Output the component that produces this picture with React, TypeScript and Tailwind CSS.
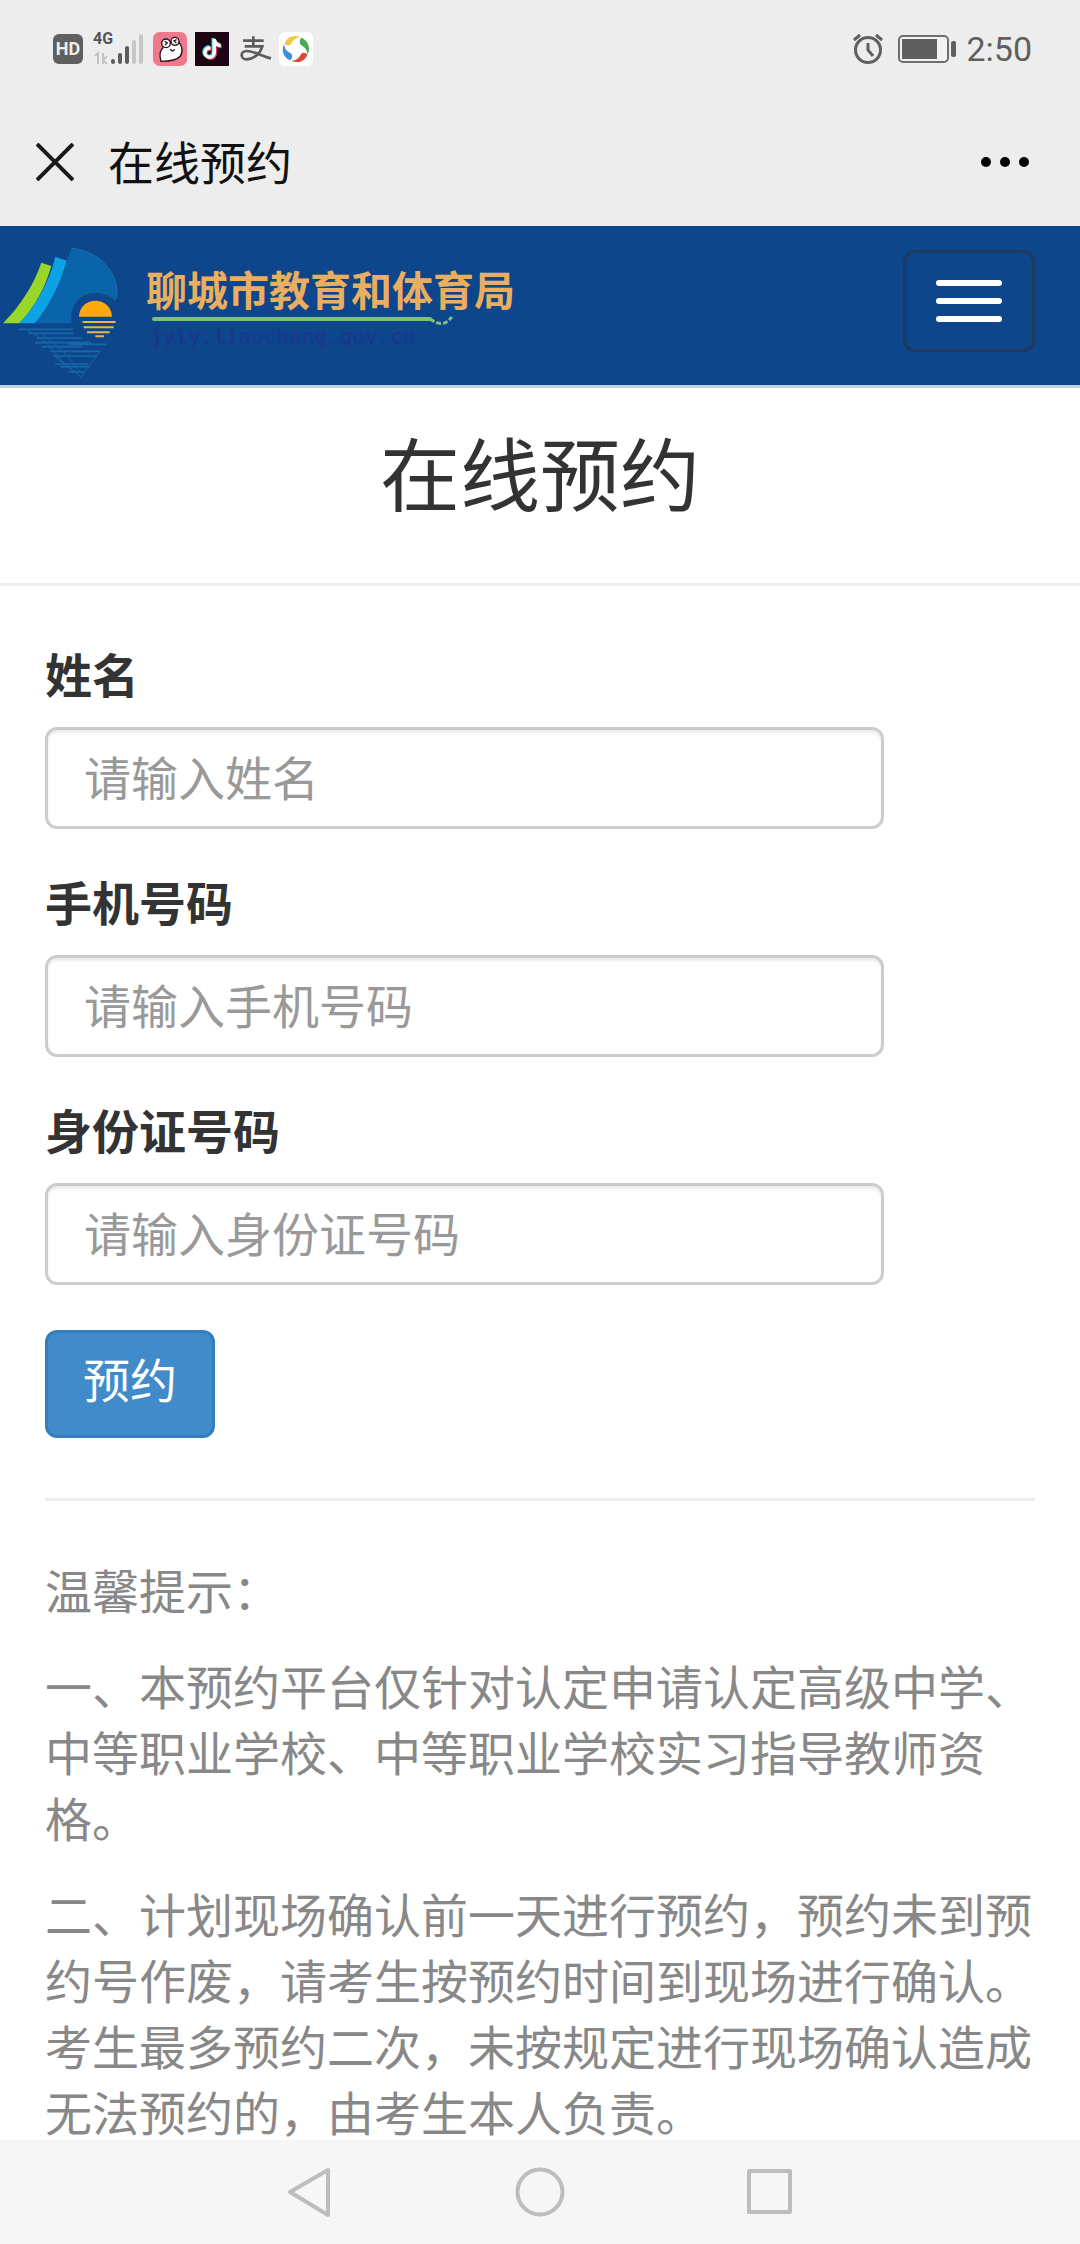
import type { ReactNode } from "react";
import { FaTiktok } from "react-icons/fa";

const FIELDS = [
  { id: "name", label: "姓名", placeholder: "请输入姓名", type: "text" },
  { id: "phone", label: "手机号码", placeholder: "请输入手机号码", type: "tel" },
  { id: "idcard", label: "身份证号码", placeholder: "请输入身份证号码", type: "text" },
];

const TIPS = [
  "温馨提示：",
  "一、本预约平台仅针对认定申请认定高级中学、中等职业学校、中等职业学校实习指导教师资格。",
  "二、计划现场确认前一天进行预约，预约未到预约号作废，请考生按预约时间到现场进行确认。考生最多预约二次，未按规定进行现场确认造成无法预约的，由考生本人负责。",
];

function Signal() {
  return (
    <div className="relative ml-[10px] h-9 w-[52px]">
      <span className="absolute left-0 top-0 font-[Roboto] text-base font-bold leading-4 text-[#555]">
        4G
      </span>
      <svg viewBox="0 0 52 36" className="h-full w-full" aria-hidden="true">
        <g fill="none" stroke="#c4c4c4" strokeWidth="2">
          <path d="M2 25l3-3v11M10 22v11M14 25l-4 4 4 4" />
        </g>
        <rect x="18" y="28" width="4" height="5" rx="2" fill="#5c5c5c" />
        <rect x="25" y="22" width="4" height="11" rx="2" fill="#5c5c5c" />
        <rect x="32" y="15" width="4" height="18" rx="2" fill="#5c5c5c" />
        <rect x="39" y="9" width="4" height="24" rx="2" fill="#c6c6c6" />
        <rect x="46" y="3" width="4" height="30" rx="2" fill="#c6c6c6" />
      </svg>
    </div>
  );
}

function FrogApp() {
  return (
    <svg viewBox="0 0 102 102" className="ml-2 size-[34px]" aria-hidden="true">
      <rect width="102" height="102" rx="20" fill="#f0788c" />
      <path
        d="M30 47C18 58 20 74 24 88c22 0 47-2 58-16 10-14 4-34-6-43-8-6-16 1-20 4-9-9-26-4-26 14z"
        fill="#fff"
        stroke="#2b1015"
        strokeWidth="4"
      />
      <circle cx="39" cy="34" r="13" fill="#fff" stroke="#2b1015" strokeWidth="4" />
      <circle cx="66" cy="28" r="12" fill="#fff" stroke="#2b1015" strokeWidth="4" />
      <path
        d="M35 28l8 5-7 6M71 23l-8 4 7 6M52 51q5 11 13 1"
        fill="none"
        stroke="#2b1015"
        strokeWidth="4"
      />
    </svg>
  );
}

function TiktokApp() {
  return (
    <div className="relative ml-2 size-[34px] bg-[#1d0613]">
      <FaTiktok className="absolute left-[6px] top-[6px] size-5 text-[#3ad8d8]" />
      <FaTiktok className="absolute left-2 top-2 size-5 text-[#e0355f]" />
      <FaTiktok className="absolute left-[7px] top-[7px] size-5 text-white" />
    </div>
  );
}

function AlipayMark() {
  return (
    <svg viewBox="0 0 102 84" className="ml-[9px] h-7 w-[34px]" aria-hidden="true">
      <path
        d="M46 4v28M15 17h62M20 34h53C66 58 46 73 26 73 6 73 6 48 26 48c22 0 48 17 73 22"
        fill="none"
        stroke="#5c5c5c"
        strokeWidth="8"
      />
    </svg>
  );
}

function PinwheelApp() {
  return (
    <svg viewBox="0 0 102 102" className="ml-[7px] size-[34px]" aria-hidden="true">
      <rect width="102" height="102" rx="18" fill="#fff" />
      <path d="M17 37C22 14 44 6 65 16 49 17 43 24 37 35c-6 7-14 7-20 2z" fill="#f1c644" />
      <path d="M67 17c22 9 28 31 19 51-3-17-9-22-20-29-6-7-5-15 1-22z" fill="#45ab4d" />
      <path d="M85 69C77 88 56 96 37 86c16-1 23-8 28-18 6-8 15-7 20 1z" fill="#d84637" />
      <path d="M34 85C14 77 6 57 15 36c2 16 9 22 20 28 7 6 5 15-1 21z" fill="#3d8ddb" />
    </svg>
  );
}

function StatusBar() {
  return (
    <div className="flex h-[98px] items-center justify-between pl-[53px] pr-12">
      <div className="flex items-center">
        <span className="flex size-[30px] items-center justify-center rounded-md bg-[#5f5f5f] font-[Roboto] text-lg font-bold leading-none text-[#ededed]">
          HD
        </span>
        <Signal />
        <FrogApp />
        <TiktokApp />
        <AlipayMark />
        <PinwheelApp />
      </div>
      <div className="flex items-center">
        <svg
          viewBox="0 0 30 32"
          className="h-8 w-[30px]"
          fill="none"
          stroke="#5f5f5f"
          strokeWidth="3"
          aria-hidden="true"
        >
          <circle cx="15" cy="17" r="12.5" />
          <path d="M15 10v7l5 6M1 7l6-5M29 7l-6-5" />
        </svg>
        <svg viewBox="0 0 58 28" className="ml-[15px] h-7 w-[58px]" aria-hidden="true">
          <rect x="1" y="1" width="49" height="26" rx="4" fill="#f3f3f3" stroke="#6e6e6e" strokeWidth="2" />
          <rect x="4" y="4" width="35" height="20" fill="#5f5f5f" />
          <rect x="53" y="6" width="5" height="16" rx="2" fill="#5f5f5f" />
        </svg>
        <span className="ml-[10px] font-[Roboto] text-[34px] leading-10 text-[#5f5f5f]">2:50</span>
      </div>
    </div>
  );
}

function TitleBar() {
  return (
    <div className="flex h-32 items-center pl-9 pr-[51px]">
      <button type="button" aria-label="关闭" className="size-[38px]">
        <svg viewBox="0 0 38 38" stroke="#1a1a1a" strokeWidth="4">
          <path d="M1 1l36 36M37 1L1 37" />
        </svg>
      </button>
      <span className="ml-[34px] pb-1 text-[46px] leading-[60px] text-[#111]">在线预约</span>
      <button type="button" aria-label="更多" className="ml-auto flex gap-[9px]">
        <i className="size-[10px] rounded-full bg-black" />
        <i className="size-[10px] rounded-full bg-black" />
        <i className="size-[10px] rounded-full bg-black" />
      </button>
    </div>
  );
}

function BureauLogo() {
  return (
    <svg viewBox="0 18 360 477" className="h-[159px] w-[120px]" aria-hidden="true">
      <path d="M215 84c76 10 136 62 136 137 0 10-3 17-8 20-20-22-60-28-92-14-26 14-42 42-36 83H104c45-64 78-130 100-196z" fill="#0964a9" />
      <path d="M215 84c76 10 136 62 136 137 0 10-3 17-8 20" fill="none" stroke="#2a7fae" strokeWidth="2" />
      <path d="M166 110l34 12c-20 70-51 134-96 188H58c55-60 90-126 108-200z" fill="#0da2e3" />
      <path d="M124 128l30 10C136 204 104 260 58 310H9c55-56 92-116 115-182z" fill="#9ad52a" />
      <path d="M237 290c2-64 96-64 99 0z" fill="#fba90a" />
      <path d="M248 306h99M251 322h90M261 337h68M286 349h26" stroke="#e8b54e" strokeWidth="6" />
      <g fill="none" stroke="#1768aa" strokeWidth="5">
        <path d="M55 328h165M85 340h135M110 354h135M105 368h170M125 380h120M205 373h115M150 394h150M160 408h130M165 432h100M180 440h90M205 456h50" />
        <path d="M80 328l60 40 40 50 60 50M125 340l70 60 50 60M160 405l60 50M300 394l-60 80" strokeWidth="3" />
      </g>
    </svg>
  );
}

function SiteNav() {
  return (
    <nav className="flex items-start justify-between border-b-[3px] border-[#c3d0e2] bg-[#0d468a] pr-[45px]">
      <a href="#home" className="flex">
        <BureauLogo />
        <span className="flex flex-col pl-[26px] pt-[39px]">
          <span className="text-[41px] font-bold leading-[46px] text-[#e9ae60]">
            聊城市教育和体育局
          </span>
          <svg viewBox="0 0 320 14" className="h-[14px] w-80" fill="none" stroke="#7fbf7f" aria-hidden="true">
            <path d="M8 8H284" strokeWidth="4" strokeLinecap="round" />
            <path d="M284 8q12 8 18 2l4-4" strokeWidth="3" strokeDasharray="5 2" />
          </svg>
          <span className="pl-1 font-['DejaVu_Sans_Mono'] text-[21px] leading-6 text-[#1c3590]">
            jyly.liaocheng.gov.cn
          </span>
        </span>
      </a>
      <button
        type="button"
        aria-label="菜单"
        className="mt-6 flex flex-col gap-3 rounded-xl border-[3px] border-[#1f3a5c] px-[30px] py-[27px]"
      >
        <i className="h-[6px] w-[66px] rounded-full bg-white" />
        <i className="h-[6px] w-[66px] rounded-full bg-white" />
        <i className="h-[6px] w-[66px] rounded-full bg-white" />
      </button>
    </nav>
  );
}

function SystemKey({ label, children }: { label: string; children: ReactNode }) {
  return (
    <button type="button" aria-label={label} className="size-[52px]">
      <svg viewBox="0 0 52 52" fill="none" stroke="#bdbdbd" strokeWidth="4" strokeLinejoin="round">
        {children}
      </svg>
    </button>
  );
}

export default function App() {
  return (
    <div className="flex min-h-screen flex-col bg-white font-['Noto_Sans_CJK_SC',sans-serif]">
      <header className="bg-[#ededed]">
        <StatusBar />
        <TitleBar />
      </header>

      <SiteNav />
      <h1 className="border-b-[3px] border-[#eee] pb-[69px] pt-[38px] text-center text-[80px] leading-[88px] text-[#333]">
        在线预约
      </h1>

      <main className="-mb-1 flex-1 px-[45px] pt-[54px]">
        <form className="flex flex-col items-start" onSubmit={(e) => e.preventDefault()}>
          <div className="flex w-full flex-col gap-[39px]">
            {FIELDS.map((f) => (
              <div key={f.id} className="flex flex-col gap-[21px]">
                <label htmlFor={f.id} className="text-[47px] font-bold leading-[66px] text-[#333]">
                  {f.label}
                </label>
                <input
                  id={f.id}
                  type={f.type}
                  placeholder={f.placeholder}
                  className="h-[102px] w-[839px] max-w-full rounded-xl border-[3px] border-[#ccc] px-9 pb-[6px] text-[47px] text-[#555] shadow-[inset_0_3px_3px_rgba(0,0,0,0.075)] placeholder:text-[#999]"
                />
              </div>
            ))}
          </div>
          <button
            type="submit"
            className="mt-[45px] rounded-xl border-[3px] border-[#357ebd] bg-[#428bca] px-[35px] pb-6 pt-3 text-[47px] leading-[66px] text-white"
          >
            预约
          </button>
        </form>

        <hr className="mb-[55px] mt-[60px] border-t-[3px] border-[#eee]" />

        <div className="flex flex-col gap-[30px] text-[47px] leading-[66px] text-[#888]">
          {TIPS.map((tip) => (
            <p key={tip}>{tip}</p>
          ))}
        </div>
      </main>

      <footer className="flex h-[104px] items-center justify-center gap-[178px] bg-[#f6f6f6]">
        <SystemKey label="返回">
          <path d="M44 4v45L6 26z" />
        </SystemKey>
        <SystemKey label="主页">
          <circle cx="26" cy="26" r="22.5" />
        </SystemKey>
        <SystemKey label="最近任务">
          <rect x="5" y="5" width="41" height="41" />
        </SystemKey>
      </footer>
    </div>
  );
}
